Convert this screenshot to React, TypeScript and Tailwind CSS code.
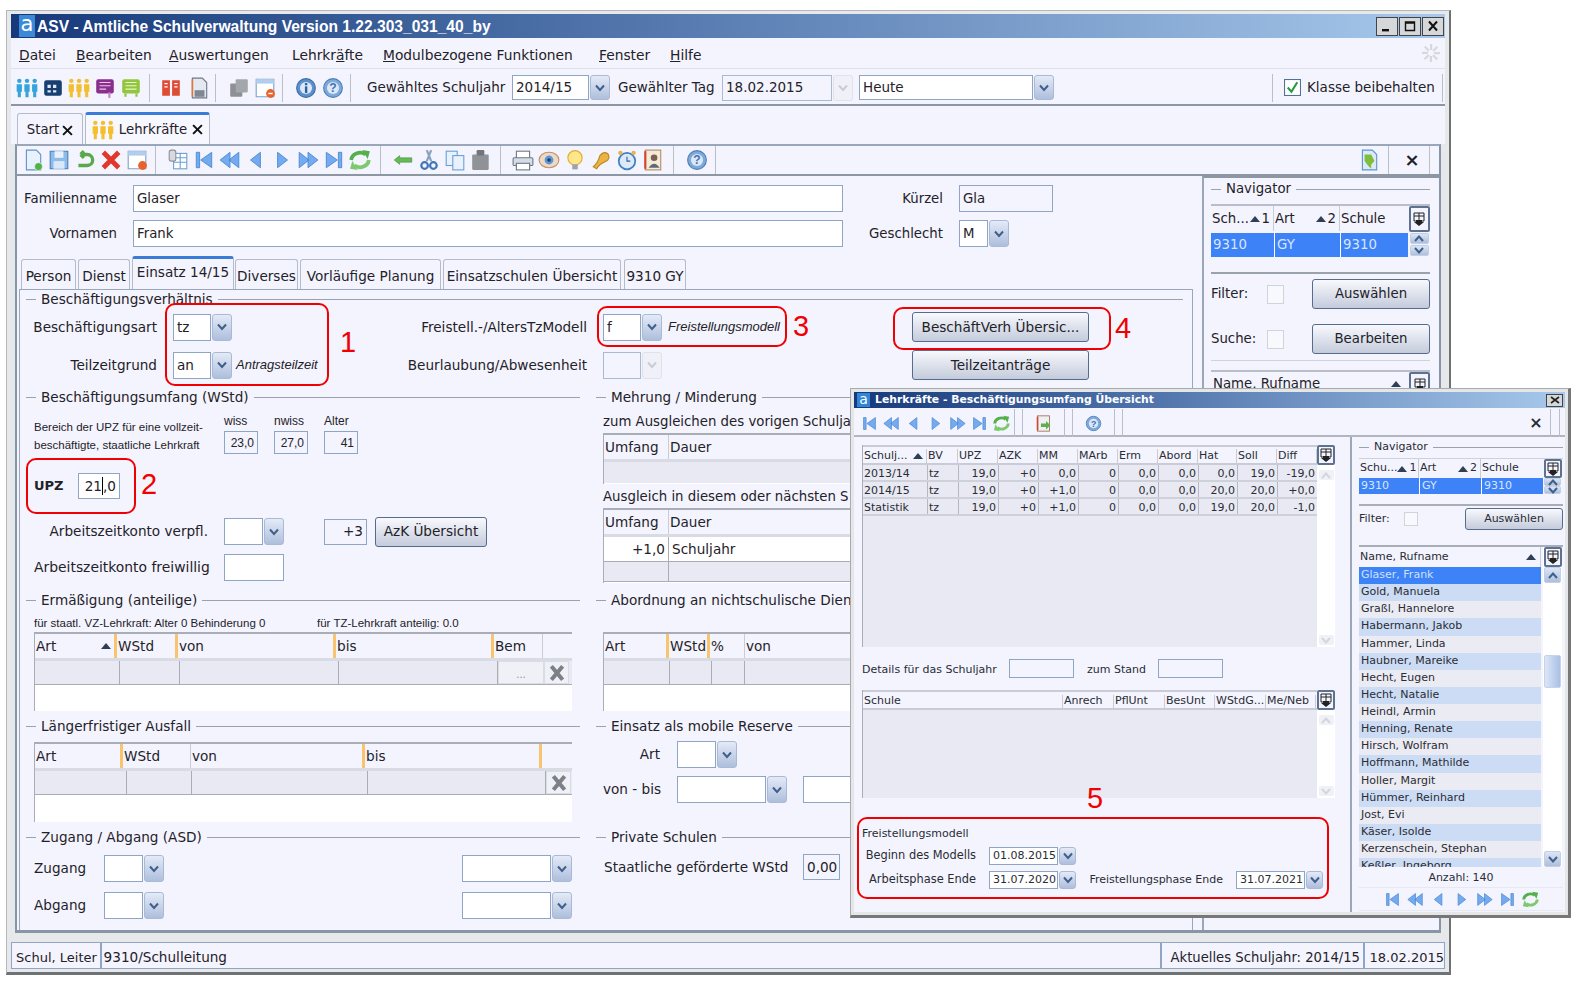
import type { ReactNode } from "react";

const names = [
  "Glaser, Frank", "Gold, Manuela", "Graßl, Hannelore", "Habermann, Jakob", "Hammer, Linda", "Haubner, Mareike",
  "Hecht, Eugen", "Hecht, Natalie", "Heindl, Armin", "Henning, Renate", "Hirsch, Wolfram", "Hoffmann, Mathilde",
  "Holler, Margit", "Hümmer, Reinhard", "Jost, Evi", "Käser, Isolde", "Kerzenschein, Stephan", "Keßler, Ingeborg",
];

const overview = [
  ["2013/14", "tz", "19,0", "+0", "0,0", "0", "0,0", "0,0", "0,0", "19,0", "-19,0"],
  ["2014/15", "tz", "19,0", "+0", "+1,0", "0", "0,0", "0,0", "20,0", "20,0", "+0,0"],
  ["Statistik", "tz", "19,0", "+0", "+1,0", "0", "0,0", "0,0", "19,0", "20,0", "-1,0"],
];

const overviewCols = ["w-[65px]", "w-[31px]", "w-[40px]", "w-[40px]", "w-[40px]", "w-[40px]", "w-[40px]", "w-[40px]", "w-[39px]", "w-[40px]", "w-[40px]"];

type Col = { w: string; label: string; edge?: "orange" | "line"; sort?: string };

const ermCols: Col[] = [
  { w: "w-[82px]", label: "Art", edge: "orange", sort: " " },
  { w: "w-[61px]", label: "WStd", edge: "orange" },
  { w: "w-[158px]", label: "von", edge: "orange" },
  { w: "w-[158px]", label: "bis", edge: "orange" },
  { w: "w-[49px]", label: "Bem", edge: "line" },
];
const ausfallCols: Col[] = [
  { w: "w-[88px]", label: "Art", edge: "orange" },
  { w: "w-[68px]", label: "WStd", edge: "line" },
  { w: "w-[174px]", label: "von", edge: "orange" },
  { w: "w-[177px]", label: "bis", edge: "orange" },
];
const abordCols: Col[] = [
  { w: "w-[65px]", label: "Art", edge: "orange" },
  { w: "w-[41px]", label: "WStd", edge: "orange" },
  { w: "w-[35px]", label: "%", edge: "line" },
  { w: "w-[100px]", label: "von" },
];
const umfangCols1: Col[] = [
  { w: "w-[65px]", label: "Umfang", edge: "line" },
  { w: "w-[180px]", label: "Dauer" },
];
const overviewHead: Col[] = [
  { w: "w-[64px]", label: "Schulj...", edge: "line", sort: " " },
  { w: "w-[31px]", label: "BV", edge: "line" },
  { w: "w-[40px]", label: "UPZ", edge: "line" },
  { w: "w-[40px]", label: "AZK", edge: "line" },
  { w: "w-[40px]", label: "MM", edge: "line" },
  { w: "w-[40px]", label: "MArb", edge: "line" },
  { w: "w-[40px]", label: "Erm", edge: "line" },
  { w: "w-[40px]", label: "Abord", edge: "line" },
  { w: "w-[39px]", label: "Hat", edge: "line" },
  { w: "w-[40px]", label: "Soll", edge: "line" },
  { w: "w-[40px]", label: "Diff", edge: "line" },
];
const detailHead: Col[] = [
  { w: "w-[200px]", label: "Schule", edge: "line" },
  { w: "w-[51px]", label: "Anrech", edge: "line" },
  { w: "w-[51px]", label: "PflUnt", edge: "line" },
  { w: "w-[50px]", label: "BesUnt", edge: "line" },
  { w: "w-[51px]", label: "WStdG...", edge: "line" },
  { w: "w-[50px]", label: "Me/Neb", edge: "line" },
];

function Chevron({ muted }: { muted?: boolean }) {
  return (
    <svg viewBox="0 0 10 8" className="w-[10px] h-[8px]">
      <path d="M1 1.5 L5 6 L9 1.5" fill="none" stroke={muted ? "#c9ccd4" : "#3f5f8c"} strokeWidth="2" />
    </svg>
  );
}

function Combo({ w, h = "h-[27px]", value, disabled, small, caret }: { w: string; h?: string; value?: string; disabled?: boolean; small?: boolean; caret?: boolean }) {
  return (
    <div className={`flex shrink-0 ${h}`}>
      <div className={`${w} border ${disabled ? "border-[#a9bad2] bg-[#f3f4fe]" : "border-[#8ea5c6] bg-white"} flex items-center pl-[3px]`}>
        {value}
        {caret && <span className="inline-block w-px h-[14px] bg-black ml-px" />}
      </div>
      <div className={`${small ? "w-[17px]" : "w-[20px]"} ml-px rounded-[3px] border flex items-center justify-center ${disabled ? "border-[#e0e2ea] bg-[#f0f1f8]" : "border-[#a9bad6] bg-gradient-to-b from-[#e4eaf7] to-[#aebfdc]"}`}>
        <Chevron muted={disabled} />
      </div>
    </div>
  );
}

function Box({ w, h = "h-[27px]", children, align = "justify-start", ro }: { w: string; h?: string; children?: ReactNode; align?: string; ro?: boolean }) {
  return <div className={`${w} ${h} shrink-0 border border-[#8ea5c6] ${ro ? "bg-[#f3f4fe]" : "bg-white"} flex items-center px-[3px] ${align}`}>{children}</div>;
}

function Legend({ title, className = "" }: { title: string; className?: string }) {
  return (
    <div className={`flex items-center h-[18px] ${className}`}>
      <div className="w-[10px] h-px bg-[#9aa2ae] shrink-0" />
      <span className="px-[5px] whitespace-nowrap">{title}</span>
      <div className="flex-1 h-px bg-[#9aa2ae]" />
    </div>
  );
}

function Btn({ w, h = "h-[30px]", children }: { w: string; h?: string; children: ReactNode }) {
  return (
    <div className={`${w} ${h} shrink-0 flex items-center justify-center rounded-[3px] border border-[#566c8d] bg-gradient-to-b from-[#f8f9fd] to-[#c4cbdb] whitespace-nowrap`}>
      {children}
    </div>
  );
}

function SortMark() {
  return <span className="inline-block w-0 h-0 border-x-[5px] border-x-transparent border-b-[6px] border-b-[#2f3f55]" />;
}

function HeadCells({ cols, h = "h-[24px]" }: { cols: Col[]; h?: string }) {
  return (
    <div className={`flex ${h} shrink-0`}>
      {cols.map((c) => (
        <div key={c.label} className={`${c.w} shrink-0 flex items-center justify-between pl-[1px] pr-[3px] overflow-hidden whitespace-nowrap ${c.edge === "orange" ? "border-r-[3px] border-[#f8c46f]" : c.edge === "line" ? "border-r border-[#c8ccd8]" : ""}`}>
          <span>{c.label}</span>
          {c.sort && (
            <span className="flex items-center gap-[2px]">
              <SortMark />
              {c.sort.trim()}
            </span>
          )}
        </div>
      ))}
    </div>
  );
}

function EmptyRow({ cells, children, h = "h-[24px]" }: { cells: string[]; children?: ReactNode; h?: string }) {
  return (
    <div className={`flex ${h} bg-[#e8e9f2] border-b border-[#a9adb6]`}>
      {cells.map((c, i) => (
        <div key={i} className={`${c} shrink-0 border-r border-[#a9adb6]`} />
      ))}
      {children}
    </div>
  );
}

function GridFrame({ w, h, children }: { w: string; h: string; children: ReactNode }) {
  return <div className={`${w} ${h} shrink-0 bg-white border-t-2 border-l border-[#a9adb6] overflow-hidden`}>{children}</div>;
}

function HeadBand({ cols }: { cols: Col[] }) {
  return (
    <div className="bg-[#f3f4fe] border-b-[3px] border-[#d9dbe4]">
      <HeadCells cols={cols} />
    </div>
  );
}

function XBtn() {
  return (
    <div className="w-[25px] h-full shrink-0 bg-[#f0f1f6] border border-[#dadce6] flex items-center justify-center">
      <svg viewBox="0 0 16 16" className="w-[18px] h-[18px]">
        <path d="M3 2 L13 14 M13 2 L3 14" stroke="#7c8088" strokeWidth="3.6" />
      </svg>
    </div>
  );
}

/* --- icons --- */
function Ico({ children, s = "w-[22px] h-[22px]" }: { children: ReactNode; s?: string }) {
  return <svg viewBox="0 0 20 20" className={`${s} shrink-0`}>{children}</svg>;
}

function People({ c }: { c: string }) {
  return (
    <>
      {[3, 10, 17].map((x) => (
        <g key={x} fill={c}>
          <circle cx={x} cy="3.5" r="2" />
          <path d={`M${x - 2.4} 6.5 h4.8 v7 h-1 v5 h-2.8 v-5 h-1 z`} />
        </g>
      ))}
    </>
  );
}

function NavArrow({ kind }: { kind: "first" | "prev2" | "prev" | "next" | "next2" | "last" }) {
  const paths: Record<string, string> = {
    first: "M3 3 h3 v14 h-3 z M17 3 L7 10 L17 17 z",
    prev2: "M10 3 L1 10 L10 17 z M18 3 L9 10 L18 17 z",
    prev: "M14 3 L5 10 L14 17 z",
    next: "M6 3 L15 10 L6 17 z",
    next2: "M2 3 L11 10 L2 17 z M10 3 L19 10 L10 17 z",
    last: "M3 3 L13 10 L3 17 z M14 3 h3 v14 h-3 z",
  };
  return <path d={paths[kind]} fill="#74abee" stroke="#4a86d4" strokeWidth="0.8" />;
}

function Refresh() {
  return (
    <>
      <path d="M2 10 A8 7 0 0 1 15 5" fill="none" stroke="#55b04c" strokeWidth="3.4" />
      <path d="M12 1 L19 2 L17 9 z" fill="#55b04c" />
      <path d="M18 10 A8 7 0 0 1 5 15" fill="none" stroke="#7cc96e" strokeWidth="3.4" />
      <path d="M8 19 L1 18 L3 11 z" fill="#7cc96e" />
    </>
  );
}

function Help() {
  return (
    <>
      <circle cx="10" cy="10" r="8.5" fill="#7fa9d9" stroke="#4d7fb8" />
      <circle cx="10" cy="10" r="5.5" fill="#dbe8f7" />
      <text x="10" y="14" textAnchor="middle" fontSize="11" fontWeight="700" fill="#3d73b3" fontFamily="Liberation Sans, sans-serif">?</text>
    </>
  );
}

function Info() {
  return (
    <>
      <circle cx="10" cy="10" r="8.5" fill="#5f8fcb" stroke="#3e6ea8" />
      <circle cx="10" cy="10" r="5.5" fill="#dbe8f7" />
      <rect x="9" y="8.5" width="2.2" height="6" fill="#2f5f9f" />
      <rect x="9" y="5.5" width="2.2" height="2" fill="#2f5f9f" />
    </>
  );
}

function Doc({ fill = "#e9f2fc", stroke = "#5f93cf", badge }: { fill?: string; stroke?: string; badge?: string }) {
  return (
    <>
      <path d="M4 1 h9 l4 4 v14 h-13 z" fill={fill} stroke={stroke} />
      {badge && <circle cx="15" cy="16" r="3.6" fill={badge} stroke="#fff" strokeWidth="0.5" />}
    </>
  );
}

function Sep() {
  return <div className="w-px h-[28px] bg-[#b9bec8] shrink-0" />;
}

function NavIcons({ s, gap = "gap-[4px]" }: { s?: string; gap?: string }) {
  const kinds = ["first", "prev2", "prev", "next", "next2", "last"] as const;
  return (
    <div className={`flex items-center ${gap}`}>
      {kinds.map((k) => (
        <Ico key={k} s={s}><NavArrow kind={k} /></Ico>
      ))}
      <Ico s={s}><Refresh /></Ico>
    </div>
  );
}

function PickerBtn({ s = "w-[21px] h-[26px]" }: { s?: string }) {
  return (
    <div className={`${s} shrink-0 rounded-[2px] border-2 border-[#5d7192] bg-[#f3f4fe] flex items-center justify-center`}>
      <svg viewBox="0 0 12 14" className="w-[12px] h-[14px]">
        <path d="M1 1 h10 v8 h-10 z M1 4 h10 M6 1 v8" fill="none" stroke="#222" strokeWidth="1" />
        <path d="M3 8 h6 v2 h2 L6 14 L1 10 h2 z" fill="#222" />
      </svg>
    </div>
  );
}

function ScrollBtn({ dir, w = "w-[19px]", h = "h-[12px]", active = true }: { dir: "up" | "down"; w?: string; h?: string; active?: boolean }) {
  return (
    <div className={`${w} ${h} rounded-[2px] flex items-center justify-center ${active ? "bg-gradient-to-b from-[#dce5f5] to-[#aebfdc] border border-[#c2cfe4]" : "bg-[#f0f1f6]"}`}>
      <svg viewBox="0 0 10 7" className="w-[10px] h-[7px]">
        <path d={dir === "up" ? "M1 6 L5 1.5 L9 6" : "M1 1 L5 5.5 L9 1"} fill="none" stroke={active ? "#3f5f8c" : "#d4d6dd"} strokeWidth="2" />
      </svg>
    </div>
  );
}

function Ring({ className }: { className: string }) {
  return <div className={`absolute border-2 border-[#f00000] rounded-[10px] pointer-events-none ${className}`} />;
}

function Num({ className, n }: { className: string; n: string }) {
  return <div className={`absolute font-['Liberation_Sans',sans-serif] text-[#f00000] text-[29px] leading-none ${className}`}>{n}</div>;
}

function MainToolbar() {
  return (
    <div className="h-[37px] bg-[#f3f4fe] border-b-2 border-[#8d96a3] flex items-center pl-[5px] pt-[2px] text-[13.5px]">
      <div className="flex items-center gap-[4px] w-[133px]">
        <Ico><People c="#36a4dc" /></Ico>
        <Ico><rect x="2" y="3" width="16" height="14" rx="2" fill="#173f72" /><path d="M5 7 h3 v3 h-3 z M10 7 h3 v3 h-3 z M5 12 h3 v2 h-3 z M10 12 h3 v2 h-3 z" fill="#dfe8f5" /></Ico>
        <Ico><People c="#f4bf2e" /></Ico>
        <Ico><rect x="2" y="2" width="16" height="13" rx="2" fill="#8a2f8d" /><path d="M5 5 h10 M5 8 h10 M5 11 h6" stroke="#e8c8e8" /><path d="M14 14 v5" stroke="#c58ac6" strokeWidth="2" /></Ico>
        <Ico><rect x="2" y="2" width="16" height="13" rx="2" fill="#93c63f" /><path d="M5 5 h10 M5 8 h10 M5 11 h10" stroke="#eaf6cc" /><path d="M5 15 v3 M15 15 v3" stroke="#93c63f" strokeWidth="2" /></Ico>
      </div>
      <Sep />
      <div className="flex items-center gap-[6px] w-[65px] pl-[10px]">
        <Ico><path d="M2 3 h7 v14 h-7 z M11 3 h7 v14 h-7 z" fill="#df4b33" /><path d="M4 6 h3 M4 9 h3 M13 6 h3 M13 9 h3" stroke="#fff" /></Ico>
        <Ico><Doc fill="#e4e8f0" stroke="#6d7888" /><path d="M4 2 v16" stroke="#d97a3c" strokeWidth="1.5" /><rect x="6" y="12" width="9" height="6" fill="#7f8794" /></Ico>
      </div>
      <Sep />
      <div className="flex items-center gap-[4px] w-[66px] pl-[12px]">
        <Ico><rect x="2" y="6" width="11" height="12" rx="1" fill="#8d9094" /><rect x="7" y="2" width="11" height="12" rx="1" fill="#a3a6aa" /></Ico>
        <Ico><path d="M2 2 h16 v16 h-16 z" fill="#fff" stroke="#7fa0c9" /><path d="M2 2 h16 v4 h-16 z" fill="#b3cdec" /><circle cx="15" cy="15" r="4" fill="#e9622a" /><path d="M13 15 h4" stroke="#fff" strokeWidth="1.3" /></Ico>
      </div>
      <Sep />
      <div className="flex items-center gap-[5px] w-[67px] pl-[12px]">
        <Ico><Info /></Ico>
        <Ico><Help /></Ico>
      </div>
      <Sep />
      <span className="ml-[16px] w-[145px] whitespace-nowrap">Gewähltes Schuljahr</span>
      <Combo w="w-[77px]" h="h-[25px]" value="2014/15" />
      <span className="ml-[8px] w-[104px] whitespace-nowrap">Gewählter Tag</span>
      <Combo w="w-[110px]" h="h-[26px]" value="18.02.2015" disabled />
      <div className="w-[6px]" />
      <Combo w="w-[174px]" h="h-[25px]" value="Heute" />
      <div className="ml-[218px]"><Sep /></div>
      <svg viewBox="0 0 16 16" className="ml-[11px] w-[17px] h-[17px]">
        <rect x="0.5" y="0.5" width="15" height="15" fill="#fff" stroke="#52709c" />
        <path d="M3.5 8 L7 12 L12.5 3" fill="none" stroke="#2a9a42" strokeWidth="2" />
      </svg>
      <span className="ml-[6px] whitespace-nowrap">Klasse beibehalten</span>
      <div className="ml-[7px]"><Sep /></div>
    </div>
  );
}

function SecondToolbar() {
  return (
    <div className="h-[30px] flex items-center pl-[5px] bg-[#f3f4fe] border-b-2 border-[#8d96a3]">
      <div className="flex items-center gap-[4px] w-[133px]">
        <Ico><Doc badge="#51b24a" /></Ico>
        <Ico><path d="M2 2 h16 v16 h-16 z" fill="#8fbbe8" stroke="#4a80bd" /><rect x="6" y="2" width="8" height="6" fill="#e9f2fc" /><rect x="5" y="11" width="10" height="7" fill="#d9e8f8" /></Ico>
        <Ico><path d="M6 5 h6 a5 5 0 0 1 0 10 h-8 M6 5 l3 -3 M6 5 l3 3" fill="none" stroke="#57a94b" strokeWidth="3" /></Ico>
        <Ico><path d="M3 3 L17 17 M17 3 L3 17" stroke="#e2372b" strokeWidth="4.4" /></Ico>
        <Ico><path d="M2 2 h16 v16 h-16 z" fill="#fff" stroke="#7fa0c9" /><path d="M2 2 h16 v4 h-16 z" fill="#b3cdec" /><circle cx="15" cy="15" r="4" fill="#e9622a" /></Ico>
      </div>
      <Sep />
      <div className="flex items-center gap-[4px] w-[224px] pl-[11px]">
        <Ico><rect x="6" y="4" width="12" height="14" fill="#fff" stroke="#6aa0d5" /><path d="M6 8 h12 M6 12 h12 M12 4 v14" stroke="#6aa0d5" /><rect x="2" y="1" width="6" height="10" rx="2" fill="#d7d9de" stroke="#8d9198" /></Ico>
        <NavIcons />
      </div>
      <Sep />
      <div className="flex items-center gap-[4px] w-[119px] pl-[11px]">
        <Ico><path d="M2 10 l5 -4 v2 h11 v4 h-11 v2 z" fill="#67b955" stroke="#3e8d36" strokeWidth="0.5" /></Ico>
        <Ico><path d="M12 1 L8 11 M8 1 L12 11" stroke="#8aa3bf" strokeWidth="2" /><circle cx="6" cy="15" r="3" fill="none" stroke="#3f76b8" strokeWidth="2" /><circle cx="14" cy="15" r="3" fill="none" stroke="#3f76b8" strokeWidth="2" /></Ico>
        <Ico><rect x="2" y="2" width="10" height="13" fill="#e9f2fc" stroke="#6aa0d5" /><rect x="8" y="6" width="10" height="13" fill="#e9f2fc" stroke="#6aa0d5" /></Ico>
        <Ico><rect x="2" y="5" width="15" height="14" rx="1" fill="#8f9296" /><rect x="6" y="1" width="7" height="5" rx="1" fill="#72757a" /></Ico>
      </div>
      <Sep />
      <div className="flex items-center gap-[4px] w-[172px] pl-[11px]">
        <Ico><rect x="4" y="2" width="12" height="7" fill="#fff" stroke="#6d7888" /><rect x="1" y="8" width="18" height="7" rx="1" fill="#d5dce8" stroke="#6d7888" /><rect x="4" y="13" width="12" height="6" fill="#fff" stroke="#6d7888" /></Ico>
        <Ico><ellipse cx="10" cy="10" rx="9" ry="7" fill="#ecd9c6" stroke="#c4906a" /><circle cx="10" cy="10" r="4" fill="#5c95d6" /><circle cx="10" cy="10" r="1.6" fill="#1c3c66" /></Ico>
        <Ico><circle cx="10" cy="8" r="6.5" fill="#fde68b" stroke="#e3ad2d" /><rect x="7.5" y="14" width="5" height="4.5" fill="#9da3ad" /></Ico>
        <Ico><path d="M3 16 Q7 13 9 6 Q12 2 16 4 Q19 8 15 11 Q8 14 6 18 z" fill="#e8b444" stroke="#bb8420" /></Ico>
        <Ico><circle cx="10" cy="11" r="7.5" fill="#dce9f8" stroke="#3f81c6" strokeWidth="1.6" /><path d="M10 7 v4 h3" stroke="#2d5f9f" fill="none" /><circle cx="4" cy="3.5" r="2" fill="#e8b444" /><circle cx="16" cy="3.5" r="2" fill="#e8b444" /></Ico>
        <Ico><rect x="3" y="1" width="14" height="18" fill="#f4ead8" stroke="#b58c66" /><circle cx="11" cy="8" r="3" fill="#7a6050" /><path d="M6 17 q5 -7 10 0 z" fill="#5a6a7a" /><path d="M3 2 v16" stroke="#d0482e" strokeWidth="2" /></Ico>
      </div>
      <Sep />
      <div className="w-[41px] pl-[12px]"><Ico><Help /></Ico></div>
      <Sep />
      <div className="ml-auto flex items-center">
        <Ico><Doc fill="#dbe9f8" stroke="#5f93cf" /><path d="M6 5 h6 l3 6 l-3 3 v4 l-3 -3 l-3 -4 z" fill="#7fbe3c" /></Ico>
        <div className="ml-[8px]"><Sep /></div>
        <span className="w-[40px] pl-[6px] text-center text-[18px] font-bold leading-none">×</span>
        <Sep />
        <div className="w-[9px]" />
      </div>
    </div>
  );
}

function MainForm() {
  return (
    <div className="w-[1185px] shrink-0 flex flex-col pl-[2px] text-[13.6px]">
      {/* stammdaten */}
      <div className="flex mt-[9px] h-[27px] items-center text-[13.3px]">
        <span className="w-[98px] text-right mr-[16px]">Familienname</span>
        <Box w="w-[710px]">Glaser</Box>
        <span className="w-[100px] text-right mr-[16px]">Kürzel</span>
        <Box w="w-[94px]" ro>Gla</Box>
      </div>
      <div className="flex mt-[8px] h-[27px] items-center text-[13.3px]">
        <span className="w-[98px] text-right mr-[16px]">Vornamen</span>
        <Box w="w-[710px]">Frank</Box>
        <span className="w-[100px] text-right mr-[16px]">Geschlecht</span>
        <Combo w="w-[29px]" value="M" />
      </div>

      {/* reiter */}
      <div className="flex items-end mt-[9px] h-[33px] pl-[2px] gap-[2px] whitespace-nowrap">
        <Tab w="w-[55px]">Person</Tab>
        <Tab w="w-[52px]">Dienst</Tab>
        <div className="w-[102px] h-[33px] -mr-[1px] bg-[#f3f4fe] rounded-t-[3px] border-t-[3px] border-x border-[#3a7bd8] border-x-[#b4bccb] flex justify-center pt-[3px] z-10">Einsatz 14/15</div>
        <Tab w="w-[63px]">Diverses</Tab>
        <Tab w="w-[141px]">Vorläufige Planung</Tab>
        <Tab w="w-[178px]">Einsatzschulen Übersicht</Tab>
        <div className="ml-px"><Tab w="w-[62px]">9310 GY</Tab></div>
      </div>

      <div className="w-[1174px] h-[641px] border-t border-r border-l border-[#9aa7bb] flex flex-col pl-[6px]">
        <Legend title="Beschäftigungsverhältnis" className="w-[1157px]" />
        <div className="flex items-center mt-[5px] h-[28px]">
          <span className="w-[131px] text-right whitespace-nowrap">Beschäftigungsart</span>
          <div className="ml-[16px]"><Combo w="w-[38px]" value="tz" /></div>
          <span className="w-[355px] text-right whitespace-nowrap">Freistell.-/AltersTzModell</span>
          <div className="ml-[16px]"><Combo w="w-[38px]" value="f" /></div>
          <span className="ml-[6px] w-[244px] italic text-[13px] font-['Liberation_Sans',sans-serif] whitespace-nowrap">Freistellungsmodell</span>
          <Btn w="w-[177px]">BeschäftVerh Übersic...</Btn>
        </div>
        <div className="flex items-center mt-[10px] h-[28px]">
          <span className="w-[131px] text-right whitespace-nowrap">Teilzeitgrund</span>
          <div className="ml-[16px]"><Combo w="w-[38px]" value="an" /></div>
          <span className="ml-[4px] w-[86px] italic text-[13px] font-['Liberation_Sans',sans-serif] whitespace-nowrap">Antragsteilzeit</span>
          <span className="w-[265px] text-right whitespace-nowrap">Beurlaubung/Abwesenheit</span>
          <div className="ml-[16px]"><Combo w="w-[38px]" disabled /></div>
          <div className="ml-[250px]"><Btn w="w-[177px]">Teilzeitanträge</Btn></div>
        </div>

        <div className="flex mt-[11px]">
          <div className="w-[554px] shrink-0 flex flex-col">
            <Legend title="Beschäftigungsumfang (WStd)" className="-translate-y-[2px]" />
            <div className="flex h-[50px] pl-[8px]">
              <div className="w-[190px] font-['Liberation_Sans',sans-serif] text-[11.5px] leading-[18px] pt-[10px] whitespace-nowrap">
                <div>Bereich der UPZ für eine vollzeit-</div>
                <div>beschäftigte, staatliche Lehrkraft</div>
              </div>
              <MiniField label="wiss" value="23,0" />
              <MiniField label="nwiss" value="27,0" />
              <MiniField label="Alter" value="41" />
            </div>
            <div className="flex items-center mt-[15px] h-[26px] pl-[8px]">
              <b className="w-[44px] font-bold text-[13px]">UPZ</b>
              <Box w="w-[42px]" h="h-[26px]" align="justify-end">21<span className="inline-block w-px h-[18px] bg-black" />,0</Box>
            </div>
            <div className="flex items-center mt-[19px] h-[27px] pl-[8px]">
              <span className="w-[174px] text-right whitespace-nowrap mr-[16px]">Arbeitszeitkonto verpfl.</span>
              <Combo w="w-[39px]" />
              <div className="w-[40px]" />
              <Box w="w-[43px]" h="h-[26px]" align="justify-end" ro>+3</Box>
              <div className="w-[8px]" />
              <Btn w="w-[112px]">AzK Übersicht</Btn>
            </div>
            <div className="flex items-center mt-[9px] h-[27px] pl-[8px]">
              <span className="w-[174px] text-right whitespace-nowrap mr-[16px] text-[13.9px]">Arbeitszeitkonto freiwillig</span>
              <Box w="w-[60px]" />
            </div>
            <Legend title="Ermäßigung (anteilige)" className="mt-[12px] -translate-y-[2px]" />
            <div className="flex mt-[5px] h-[16px] pl-[8px] items-center font-['Liberation_Sans',sans-serif] text-[11.5px] whitespace-nowrap">
              <span className="w-[283px]">für staatl. VZ-Lehrkraft: Alter 0 Behinderung 0</span>
              <span>für TZ-Lehrkraft anteilig: 0.0</span>
            </div>
            <div className="pl-[8px]">
              <GridFrame w="w-[538px]" h="h-[79px]">
                <HeadBand cols={ermCols} />
                <EmptyRow cells={["w-[85px]", "w-[60px]", "w-[159px]", "w-[159px]"]}>
                  <div className="w-[46px] shrink-0 bg-[#f0f1f6] border border-[#dadce6] flex items-end justify-center text-[10px] text-[#8a8e96] leading-[16px]">...</div>
                  <XBtn />
                </EmptyRow>
              </GridFrame>
            </div>
            <Legend title="Längerfristiger Ausfall" className="mt-[8px] -translate-y-[2px]" />
            <div className="pl-[8px] mt-[5px]">
              <GridFrame w="w-[538px]" h="h-[80px]">
                <HeadBand cols={ausfallCols} />
                <EmptyRow cells={["w-[92px]", "w-[65px]", "w-[176px]", "w-[178px]"]}>
                  <XBtn />
                </EmptyRow>
              </GridFrame>
            </div>
            <Legend title="Zugang / Abgang (ASD)" className="mt-[8px] -translate-y-[2px]" />
            <div className="flex items-center justify-between mt-[7px] h-[27px] pl-[8px] pr-[8px]">
              <div className="flex items-center"><span className="w-[70px]">Zugang</span><Combo w="w-[39px]" /></div>
              <Combo w="w-[89px]" />
            </div>
            <div className="flex items-center justify-between mt-[10px] h-[27px] pl-[8px] pr-[8px]">
              <div className="flex items-center"><span className="w-[70px]">Abgang</span><Combo w="w-[39px]" /></div>
              <Combo w="w-[89px]" />
            </div>
          </div>

          <div className="w-[256px] shrink-0 ml-[16px] flex flex-col overflow-hidden">
            <Legend title="Mehrung / Minderung" className="-translate-y-[2px]" />
            <div className="mt-[6px] h-[16px] pl-[7px] flex items-center whitespace-nowrap text-[13.3px]">zum Ausgleichen des vorigen Schulja</div>
            <div className="pl-[7px] mt-[3px]">
              <GridFrame w="w-[300px]" h="h-[51px]">
                <HeadBand cols={umfangCols1} />
                <div className="h-[21px] bg-[#e8e9f2]" />
              </GridFrame>
            </div>
            <div className="mt-[5px] h-[16px] pl-[7px] flex items-center whitespace-nowrap text-[13.3px]">Ausgleich in diesem oder nächsten S</div>
            <div className="pl-[7px] mt-[3px]">
              <GridFrame w="w-[300px]" h="h-[75px]">
                <HeadBand cols={umfangCols1} />
                <div className="flex h-[25px] border-b border-[#a9adb6]">
                  <div className="w-[65px] shrink-0 border-r border-[#a9adb6] text-right pr-[3px] leading-[24px]">+1,0</div>
                  <div className="pl-[3px] leading-[24px]">Schuljahr</div>
                </div>
                <EmptyRow cells={["w-[65px]"]} h="h-[20px]" />
              </GridFrame>
            </div>
            <Legend title="Abordnung an nichtschulische Dien" className="mt-[10px] -translate-y-[2px]" />
            <div className="pl-[7px] mt-[21px]">
              <GridFrame w="w-[300px]" h="h-[79px]">
                <HeadBand cols={abordCols} />
                <EmptyRow cells={["w-[66px]", "w-[42px]", "w-[33px]"]} />
              </GridFrame>
            </div>
            <Legend title="Einsatz als mobile Reserve" className="mt-[8px] -translate-y-[2px]" />
            <div className="flex items-center mt-[4px] h-[27px] pl-[7px]">
              <span className="w-[57px] text-right mr-[17px]">Art</span>
              <Combo w="w-[39px]" />
            </div>
            <div className="flex items-center mt-[8px] h-[27px] pl-[7px]">
              <span className="w-[57px] shrink-0 text-right mr-[17px] whitespace-nowrap">von - bis</span>
              <Combo w="w-[89px]" />
              <div className="w-[16px] shrink-0" />
              <Combo w="w-[89px]" />
            </div>
            <Legend title="Private Schulen" className="mt-[27px] -translate-y-[2px]" />
            <div className="flex items-center mt-[6px] h-[26px] pl-[8px]">
              <span className="w-[199px] whitespace-nowrap">Staatliche geförderte WStd</span>
              <Box w="w-[37px]" h="h-[26px]" ro>0,00</Box>
            </div>
          </div>
        </div>
      </div>
    </div>
  );
}

function Tab({ w, children }: { w: string; children: ReactNode }) {
  return <div className={`${w} h-[30px] shrink-0 rounded-t-[3px] border-t border-x border-[#b4bccb] flex justify-center items-center pt-[3px]`}>{children}</div>;
}

function MiniField({ label, value }: { label: string; value: string }) {
  return (
    <div className="w-[50px] flex flex-col text-[12px] font-['Liberation_Sans',sans-serif]">
      <span className="h-[23px] pt-[6px] leading-[14px]">{label}</span>
      <Box w="w-[34px]" h="h-[23px]" align="justify-end" ro>{value}</Box>
    </div>
  );
}

function Navigator() {
  return (
    <div className="flex-1 border-l-2 border-[#9aa7bb] pl-[7px] pr-[11px] flex flex-col border-t-2 border-t-[#8d96a3]">
      <Legend title="Navigator" className="mt-[2px]" />
      <div className="flex mt-[6px] w-[219px] border-t-2 border-[#b9bec8]">
        <div className="flex-1">
          <HeadCells h="h-[25px]" cols={[
            { w: "w-[63px]", label: "Sch...", edge: "line", sort: "1" },
            { w: "w-[66px]", label: "Art", edge: "line", sort: "2" },
            { w: "w-[67px]", label: "Schule" },
          ]} />
          <div className="flex h-[24px] mt-[2px] bg-[#3d82f6] text-[#d7e6ff] leading-[24px]">
            <span className="w-[64px] pl-[2px] border-r border-white">9310</span>
            <span className="w-[66px] pl-[2px] border-r border-white">GY</span>
            <span className="pl-[2px]">9310</span>
          </div>
        </div>
        <div className="flex flex-col items-center gap-[1px] w-[22px]">
          <PickerBtn />
          <ScrollBtn dir="up" h="h-[11px]" />
          <ScrollBtn dir="down" h="h-[11px]" />
        </div>
      </div>
      <div className="mt-[15px] h-[2px] bg-[#9aa2ae]" />
      <div className="flex items-center mt-[5px] h-[30px]">
        <span className="w-[56px]">Filter:</span>
        <div className="w-[17px] h-[19px] bg-[#f8f9fd] border border-[#cfd3dc]" />
        <div className="ml-[28px]"><Btn w="w-[118px]">Auswählen</Btn></div>
      </div>
      <div className="flex items-center mt-[15px] h-[30px]">
        <span className="w-[56px]">Suche:</span>
        <div className="w-[17px] h-[19px] bg-[#f8f9fd] border border-[#cfd3dc]" />
        <div className="ml-[28px]"><Btn w="w-[118px]">Bearbeiten</Btn></div>
      </div>
      <div className="mt-[6px] h-px bg-[#cfd3dc]" />
      <div className="mt-[9px] w-[219px] border-t-2 border-[#b9bec8] flex justify-between">
        <div className="flex-1 pl-[2px] flex justify-between pr-[8px] items-center h-[24px]"><span>Name, Rufname</span><SortMark /></div>
        <PickerBtn />
      </div>
    </div>
  );
}

function Popup() {
  return (
    <div className="absolute left-[850px] top-[388px] w-[721px] h-[530px] bg-[#e4e6e8] border border-[#a8abae] border-b-[3px] border-r-[3px] border-b-[#777] border-r-[#777] p-[3px] flex flex-col font-['DejaVu_Sans',sans-serif] text-[11px] text-[#2a2c34]">
      <div className="h-[16px] flex items-center bg-gradient-to-r from-[#17397b] via-[#5c80b4] to-[#a8c9ec] text-white font-bold text-[10.8px] shrink-0">
        <div className="w-[13px] h-[14px] ml-[3px] mr-[5px] bg-[#2f86d6] text-[14px] font-normal leading-[12px] text-center">a</div>
        <span className="flex-1">Lehrkräfte - Beschäftigungsumfang Übersicht</span>
        <div className="w-[17px] h-[13px] mr-[2px] bg-[#d5d7d9] border border-[#444] flex items-center justify-center">
          <svg viewBox="0 0 10 8" className="w-[10px] h-[8px]"><path d="M1 1 L9 7 M9 1 L1 7" stroke="#222" strokeWidth="1.6" /></svg>
        </div>
      </div>
      <div className="flex-1 min-h-0 overflow-hidden bg-[#f3f4fe] flex flex-col">
        <div className="h-[29px] border-b-2 border-[#b0b5bf] flex items-center pl-[7px] pt-[3px] shrink-0">
          <NavIcons s="w-[17px] h-[17px]" gap="gap-[5px]" />
          <div className="w-[4px]" />
          <Sep /><div className="w-[7px]" /><Sep />
          <div className="mx-[12px]">
            <Ico s="w-[17px] h-[17px]"><rect x="3" y="1" width="14" height="18" fill="#f0f0f4" stroke="#a06d55" /><path d="M3 2 v16" stroke="#d0482e" strokeWidth="2" /><path d="M7 10 h6 v-3 l5 5 l-5 5 v-3 h-6 z" fill="#5eb04d" /></Ico>
          </div>
          <Sep /><div className="w-[7px]" /><Sep />
          <div className="mx-[12px]"><Ico s="w-[17px] h-[17px]"><Help /></Ico></div>
          <Sep /><div className="w-[7px]" /><Sep />
          <div className="ml-auto flex items-center">
            <span className="w-[28px] text-center text-[16px] font-bold leading-none">×</span>
            <Sep /><div className="w-[8px]" /><Sep />
            <div className="w-[5px]" />
          </div>
        </div>
        <div className="flex flex-1">
          <div className="w-[496px] shrink-0 pl-[8px] flex flex-col">
            <div className="mt-[8px] w-[473px] h-[202px] flex">
              <div className="w-[455px] shrink-0 flex flex-col border-l border-[#a9adb6]">
                <div className="border-t-2 border-b-[2px] border-[#c9ccd6]">
                  <HeadCells cols={overviewHead} h="h-[16px] pt-[2px]" />
                </div>
                <div className="flex-1 bg-[#e8e9f2]">
                  {overview.map((row) => (
                    <div key={row[0]} className="flex h-[17px] border-b-2 border-[#cfd1da] leading-[17px] whitespace-nowrap">
                      {row.map((v, i) => (
                        <div key={i} className={`${overviewCols[i]} shrink-0 border-r border-[#b5b8c2] pr-[2px] ${i < 2 ? "pl-[1px]" : "text-right"}`}>{v}</div>
                      ))}
                    </div>
                  ))}
                </div>
              </div>
              <div className="w-[18px] flex flex-col items-center bg-white">
                <PickerBtn s="w-[18px] h-[20px]" />
                <div className="mt-[5px]"><ScrollBtn dir="up" w="w-[15px]" h="h-[10px]" active={false} /></div>
                <div className="mt-auto mb-[2px]"><ScrollBtn dir="down" w="w-[15px]" h="h-[10px]" active={false} /></div>
              </div>
            </div>
            <div className="flex items-center mt-[12px] h-[19px]">
              <span className="w-[147px] pt-[3px]">Details für das Schuljahr</span>
              <Box w="w-[65px]" h="h-[19px]" ro />
              <span className="ml-[13px] w-[71px] pt-[3px]">zum Stand</span>
              <Box w="w-[65px]" h="h-[19px]" ro />
            </div>
            <div className="mt-[12px] w-[473px] h-[108px] flex">
              <div className="w-[455px] shrink-0 flex flex-col border-l border-[#a9adb6]">
                <div className="border-t-2 border-b-[2px] border-[#c9ccd6]">
                  <HeadCells cols={detailHead} h="h-[16px] pt-[3px]" />
                </div>
                <div className="flex-1 bg-[#e8e9f2]" />
              </div>
              <div className="w-[18px] flex flex-col items-center bg-white">
                <PickerBtn s="w-[18px] h-[20px]" />
                <div className="mt-[5px]"><ScrollBtn dir="up" w="w-[15px]" h="h-[10px]" active={false} /></div>
                <div className="mt-auto mb-[2px]"><ScrollBtn dir="down" w="w-[15px]" h="h-[10px]" active={false} /></div>
              </div>
            </div>
            <div className="mt-[28px] h-[16px] leading-[16px]">Freistellungsmodell</div>
            <div className="flex items-center mt-[5px] h-[18px]">
              <span className="w-[114px] text-right mr-[13px] text-[11.4px] whitespace-nowrap">Beginn des Modells</span>
              <Combo w="w-[69px]" h="h-[18px]" value="01.08.2015" small />
            </div>
            <div className="flex items-center mt-[6px] h-[18px] whitespace-nowrap">
              <span className="w-[114px] text-right mr-[13px] text-[11.4px]">Arbeitsphase Ende</span>
              <Combo w="w-[69px]" h="h-[18px]" value="31.07.2020" small />
              <span className="w-[147px] text-right mr-[13px]">Freistellungsphase Ende</span>
              <Combo w="w-[69px]" h="h-[18px]" value="31.07.2021" small caret />
            </div>
          </div>
          <div className="flex-1 border-l-2 border-[#9aa7bb] pl-[7px] pr-[7px] flex flex-col">
            <Legend title="Navigator" className="mt-[1px] h-[16px]" />
            <div className="flex mt-[2px] border-t border-[#cfd1da]">
              <div className="w-[184px] shrink-0">
                <HeadCells h="h-[19px]" cols={[
                  { w: "w-[60px]", label: "Schu...", edge: "line", sort: "1" },
                  { w: "w-[62px]", label: "Art", edge: "line", sort: "2" },
                  { w: "w-[60px]", label: "Schule" },
                ]} />
                <div className="flex h-[16px] bg-[#3d82f6] text-[#d7e6ff] leading-[16px]">
                  <span className="w-[61px] pl-[2px] border-r border-white">9310</span>
                  <span className="w-[62px] pl-[2px] border-r border-white">GY</span>
                  <span className="pl-[2px]">9310</span>
                </div>
              </div>
              <div className="flex flex-col items-center w-[19px]">
                <PickerBtn s="w-[18px] h-[19px]" />
                <ScrollBtn dir="up" w="w-[17px]" h="h-[8px]" />
                <ScrollBtn dir="down" w="w-[17px]" h="h-[8px]" />
              </div>
            </div>
            <div className="mt-[10px] h-[2px] bg-[#a9adb6]" />
            <div className="flex items-center mt-[2px] h-[22px]">
              <span className="w-[45px]">Filter:</span>
              <div className="w-[14px] h-[14px] bg-[#f8f9fd] border border-[#cfd3dc]" />
              <div className="ml-[47px]"><Btn w="w-[98px]" h="h-[22px]">Auswählen</Btn></div>
            </div>
            <div className="mt-[15px] h-[2px] bg-[#a9adb6]" />
            <div className="flex">
              <div className="w-[182px] shrink-0">
                <div className="h-[20px] flex items-center justify-between pl-[1px] pr-[4px] border-r border-[#c8ccd8]"><span>Name, Rufname</span><SortMark /></div>
                <div className="h-[300px] overflow-hidden">
                  {names.map((n, i) => (
                    <div key={n} className={`h-[17.14px] leading-[16px] pl-[2px] whitespace-nowrap ${i === 0 ? "bg-[#3d82f6] text-[#cfe0ff]" : i % 2 === 1 ? "bg-[#ccdcf5]" : "bg-[#ebebf3]"}`}>{n}</div>
                  ))}
                </div>
              </div>
              <div className="w-[19px] ml-[2px] flex flex-col items-center bg-white">
                <PickerBtn s="w-[18px] h-[20px]" />
                <ScrollBtn dir="up" w="w-[17px]" h="h-[16px]" />
                <div className="mt-[72px] w-[17px] h-[33px] rounded-[2px] bg-gradient-to-r from-[#dce6f7] to-[#a9c0e6] border border-[#c6d3e8]" />
                <div className="mt-auto"><ScrollBtn dir="down" w="w-[17px]" h="h-[16px]" /></div>
              </div>
            </div>
            <div className="h-[19px] text-center leading-[19px] mt-[1px]">Anzahl: 140</div>
            <div className="h-px bg-[#e6e8f2]" />
            <div className="h-[22px] flex justify-center items-center"><NavIcons s="w-[17px] h-[17px]" gap="gap-[6px]" /></div>
            <div className="h-px bg-[#e6e8f2]" />
          </div>
        </div>
      </div>
    </div>
  );
}

const menuItems: { w: string; node: ReactNode }[] = [
  { w: "w-[57px]", node: <><u>D</u>atei</> },
  { w: "w-[93px]", node: <><u>B</u>earbeiten</> },
  { w: "w-[123px]", node: <><u>A</u>uswertungen</> },
  { w: "w-[91px]", node: <>Lehrkr<u>ä</u>fte</> },
  { w: "w-[216px]", node: <><u>M</u>odulbezogene Funktionen</> },
  { w: "w-[71px]", node: <><u>F</u>enster</> },
  { w: "w-[40px]", node: <><u>H</u>ilfe</> },
];

export default function App() {
  return (
    <div className="relative w-[1581px] h-[990px] overflow-hidden bg-white pt-[10px] pl-[6px] font-['DejaVu_Sans',sans-serif] text-[13.3px] text-[#1f2228]">
      <div className="w-[1445px] h-[965px] bg-[#e6e8ea] border border-[#b4b7ba] border-b-[3px] border-r-[2px] border-b-[#6f7275] border-r-[#6f7275] px-[4px] pt-[3px] flex flex-col">
        {/* titel */}
        <div className="h-[24px] shrink-0 flex items-center bg-gradient-to-r from-[#17397b] via-[#5c80b4] to-[#a8c9ec]">
          <div className="w-[16px] h-[22px] ml-[8px] mr-[2px] bg-[#3a8ad8] text-white text-[21px] leading-[18px] text-center">a</div>
          <span className="flex-1 pt-px text-white font-bold text-[15.6px] font-['Liberation_Sans',sans-serif] whitespace-nowrap">ASV - Amtliche Schulverwaltung Version 1.22.303_031_40_by</span>
          <div className="flex gap-[1px] mr-[1px]">
            {["min", "max", "close"].map((k) => (
              <div key={k} className="w-[22px] h-[19px] bg-[#d5d7d9] border border-[#444] flex items-center justify-center">
                <svg viewBox="0 0 12 12" className="w-[12px] h-[12px]">
                  {k === "min" && <rect x="1" y="9" width="7" height="2.4" fill="#111" />}
                  {k === "max" && <path d="M1.5 2 h9 v8.5 h-9 z M1.5 3 h9" fill="none" stroke="#111" strokeWidth="1.4" />}
                  {k === "close" && <path d="M2 1.5 L10 10.5 M10 1.5 L2 10.5" stroke="#111" strokeWidth="2" />}
                </svg>
              </div>
            ))}
          </div>
        </div>
        {/* menue */}
        <div className="h-[31px] shrink-0 bg-[#f3f4fe] border-b border-[#dfe1ea] flex items-center pl-[8px] pt-[5px] text-[13.8px] relative whitespace-nowrap">
          {menuItems.map((m) => (
            <span key={m.w} className={m.w}>{m.node}</span>
          ))}
          <svg viewBox="0 0 20 20" className="absolute right-[4px] top-[5px] w-[20px] h-[20px]">
            {[0, 45, 90, 135, 180, 225, 270, 315].map((a) => (
              <rect key={a} x="9" y="1" width="2.2" height="6" fill="#d6d8dc" transform={`rotate(${a} 10 10)`} />
            ))}
          </svg>
        </div>
        <MainToolbar />
        {/* haupt-reiter */}
        <div className="h-[38px] shrink-0 bg-[#f3f4fe] flex items-end pl-[6px] gap-[2px]">
          <div className="w-[66px] h-[31px] rounded-t-[3px] border-t border-x border-[#b4bccb] flex items-center justify-center gap-[3px] pt-[2px]">
            <span>Start</span>
            <svg viewBox="0 0 10 10" className="w-[11px] h-[11px]"><path d="M1 1 L9 9 M9 1 L1 9" stroke="#111" strokeWidth="1.8" /></svg>
          </div>
          <div className="w-[125px] h-[32px] rounded-t-[3px] border-t-[3px] border-t-[#3a7bd8] border-x border-x-[#b4bccb] flex items-center justify-center gap-[5px] bg-[#f6f7ff]">
            <Ico><People c="#f4bf2e" /></Ico>
            <span>Lehrkräfte</span>
            <svg viewBox="0 0 10 10" className="w-[11px] h-[11px]"><path d="M1 1 L9 9 M9 1 L1 9" stroke="#111" strokeWidth="1.8" /></svg>
          </div>
        </div>
        <div className="h-[789px] shrink-0 bg-[#f3f4fe] border-2 border-[#8795a8] border-t-[#9aa7bb] flex flex-col ml-[4px] mr-[4px] border-b-[3px]">
          <SecondToolbar />
          <div className="flex flex-1 min-h-0">
            <MainForm />
            <Navigator />
          </div>
        </div>
        {/* status */}
        <div className="mt-[9px] h-[27px] shrink-0 bg-[#f3f4fe] border border-[#8ea5c6] flex items-center whitespace-nowrap pt-0">
          <span className="w-[90px] pl-[4px] border-r-2 border-[#8ea5c6] h-full leading-[29px] text-[13px]">Schul, Leiter</span>
          <span className="w-[1066px] pl-[2px] border-r-2 border-[#8ea5c6] h-full leading-[29px] text-[13.6px]">9310/Schulleitung</span>
          <span className="w-[203px] pl-[8px] border-r-2 border-[#8ea5c6] h-full leading-[29px] text-[13.2px]">Aktuelles Schuljahr: 2014/15</span>
          <span className="pl-[5px] leading-[29px] h-full text-[13px]">18.02.2015</span>
        </div>
      </div>

      <Popup />

      {/* rote Markierungen */}
      <Ring className="left-[165px] top-[303px] w-[164px] h-[83px]" />
      <Num className="left-[340px] top-[328px]" n="1" />
      <Ring className="left-[26px] top-[458px] w-[110px] h-[56px]" />
      <Num className="left-[141px] top-[470px]" n="2" />
      <Ring className="left-[597px] top-[306px] w-[190px] h-[41px]" />
      <Num className="left-[793px] top-[312px]" n="3" />
      <Ring className="left-[893px] top-[307px] w-[218px] h-[43px]" />
      <Num className="left-[1115px] top-[314px]" n="4" />
      <Ring className="left-[857px] top-[817px] w-[472px] h-[82px]" />
      <Num className="left-[1087px] top-[784px]" n="5" />
    </div>
  );
}
